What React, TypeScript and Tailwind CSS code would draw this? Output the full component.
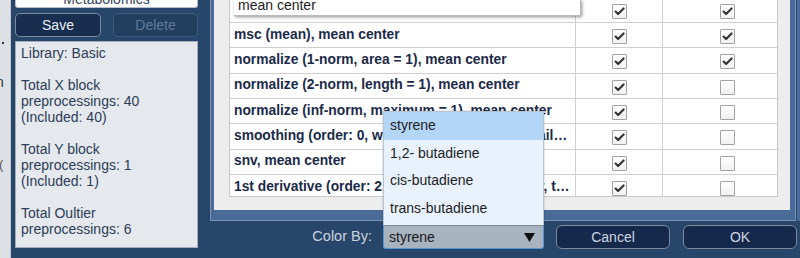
import React from "react";

const FONT = { fontFamily: '"Liberation Sans", Arial, sans-serif' };

const rows = [
  { t: "baseline (weighted least squares, order: 2, poly), mean center", a: true, b: true },
  { t: "msc (mean), mean center", a: true, b: true },
  { t: "normalize (1-norm, area = 1), mean center", a: true, b: true },
  { t: "normalize (2-norm, length = 1), mean center", a: true, b: false },
  { t: "normalize (inf-norm, maximum = 1), mean center", a: true, b: false },
  { t: "smoothing (order: 0, window: 15 pt, incl only, tails: polyinterp), mean center", a: true, b: false },
  { t: "snv, mean center", a: true, b: false },
  { t: "1st derivative (order: 2, window: 15 pt, incl only, tails: polyinterp), mean center", a: true, b: false },
];

function Check({ on }: { on: boolean }) {
  return (
    <div className="w-[15px] h-[15px] border border-[#a2a2a2] bg-gradient-to-b from-white to-[#f1f1f1] rounded-[1px] flex items-center justify-center">
      {on && (
        <svg width="11" height="9" viewBox="0 0 11 9">
          <path d="M1.6 4.6 L4.1 7.1 L9.6 1.4" fill="none" stroke="#333" strokeWidth="2.1" strokeLinecap="round" strokeLinejoin="round" />
        </svg>
      )}
    </div>
  );
}

export default function App() {
  return (
    <div className="w-[800px] h-[258px] bg-[#284669] flex overflow-hidden" style={FONT}>
      {/* left strip (window behind) */}
      <div className="w-[11px] h-full bg-[#dde1e6] border-r border-[#c3c9d1] flex flex-col overflow-hidden">
        <div className="mt-[42px] ml-[2px] w-[2px] h-[2px] bg-[#333]" />
        <div className="mt-[30px] -ml-[4px] text-[14px] leading-[16px] text-[#333]">n</div>
        <div className="mt-[68px] -ml-[1px] text-[13px] leading-[14px] text-[#555]">(</div>
      </div>

      {/* left column */}
      <div className="ml-[4px] w-[183px] flex flex-col">
        <div className="h-[8px] bg-white border-x border-b border-[#b5bfcb] rounded-b-[3px] overflow-hidden">
          <div className="-mt-[8px] text-center text-[14px] leading-[14px] text-[#34455c]">Metabolomics</div>
        </div>
        <div className="mt-[5px] flex gap-[12px]">
          <div className="w-[86px] h-[24px] rounded-[5px] bg-[#182e4e] border border-[#7e8b9b] flex items-center justify-center text-[14px] text-[#e8eef5]">
            Save
          </div>
          <div className="w-[85px] h-[24px] rounded-[5px] bg-[#233f5f] border border-[#3f5c7c] flex items-center justify-center text-[14px] text-[#5f7998]">
            Delete
          </div>
        </div>
        <div className="mt-[4px] h-[207px] bg-[#e5e8ed] border border-[#a4adba] pl-[5px] pt-[3px] text-[14px] leading-[16px] text-[#2e3d57]">
          <div>Library: Basic</div>
          <div className="h-[16px]" />
          <div>Total X block</div>
          <div>preprocessings: 40</div>
          <div>(Included: 40)</div>
          <div className="h-[16px]" />
          <div>Total Y block</div>
          <div>preprocessings: 1</div>
          <div>(Included: 1)</div>
          <div className="h-[16px]" />
          <div>Total Oultier</div>
          <div>preprocessings: 6</div>
        </div>
      </div>

      {/* right column */}
      <div className="ml-[12px] w-[587px] flex flex-col">
        <div className="w-[586px] h-[221px] bg-[#4a6b97] border-l border-r border-b border-[#7891b4] pl-[3px] pr-[5px] pb-[10px]">
          <div className="h-[210px] bg-[#ededed] pl-[15px] pr-[12px]">
            <div className="relative h-[197px] bg-white border-l border-r border-b border-[#c8c8c8] overflow-hidden">
              <div className="-mt-[2.33px]">
                {rows.map((r, i) => (
                  <div key={i} className="flex h-[25.33px] border-b border-[#cfcfcf]">
                    <div className="w-[346px] border-r border-[#cfcfcf] pl-[4px] pr-[5px] flex items-center overflow-hidden">
                      <span className="truncate font-bold text-[13.8px] text-[#1c2a48]">{r.t}</span>
                    </div>
                    <div className="w-[87px] border-r border-[#cfcfcf] flex justify-center pt-[6px]">
                      <Check on={r.a} />
                    </div>
                    <div className="flex-1 pl-[57px] pt-[6px]">
                      <Check on={r.b} />
                    </div>
                  </div>
                ))}
              </div>
              {/* tooltip */}
              <div className="absolute top-0 left-[4px] w-[347px] h-[16px] bg-white border-r border-b border-[#b9b9b9] shadow-[1px_1px_3px_rgba(0,0,0,0.45)] overflow-hidden">
                <div className="-mt-[2px] pl-[4px] text-[14px] leading-[14px] text-[#1d1d1d]">mean center</div>
              </div>
            </div>
          </div>
        </div>

        {/* bottom bar */}
        <div className="mt-[4px] h-[24px] flex items-center justify-end">
          <div className="mr-[11px] text-[14.5px] text-[#c9d3df]">Color By:</div>
          <div className="relative w-[161px] h-[24px]">
            <div className="absolute bottom-full left-0 w-[161px] bg-[#e8f1fc] border-x border-t border-[#b8c4d2] pb-[3px] shadow-[0_0_2px_rgba(0,0,0,0.25)]">
              <div className="h-[28px] bg-[#b3d6f7] pl-[6px] flex items-center text-[14px] text-[#1e1e1e]">styrene</div>
              <div className="h-[27.5px] pl-[6px] flex items-center text-[14px] text-[#1e1e1e]">1,2- butadiene</div>
              <div className="h-[27.5px] pl-[6px] flex items-center text-[14px] text-[#1e1e1e]">cis-butadiene</div>
              <div className="h-[27.5px] pl-[6px] flex items-center text-[14px] text-[#1e1e1e]">trans-butadiene</div>
            </div>
            <div className="h-[24px] bg-[#a8b3c0] border border-[#5a92d6] border-t-[#8d9aa9] rounded-b-[3px] pl-[5px] pr-[8px] flex items-center justify-between text-[14px] text-[#1a1a1a]">
              <span>styrene</span>
              <svg width="11" height="9" viewBox="0 0 11 9">
                <polygon points="0,0 11,0 5.5,9" fill="#111" />
              </svg>
            </div>
          </div>
          <div className="ml-[12px] w-[114px] h-[24px] rounded-[6px] bg-[#15294a] border border-[#7d8a9b] flex items-center justify-center text-[14px] text-[#cdd6e1]">
            Cancel
          </div>
          <div className="ml-[13px] w-[114px] h-[24px] rounded-[6px] bg-[#15294a] border border-[#7d8a9b] flex items-center justify-center text-[14px] text-[#cdd6e1]">
            OK
          </div>
        </div>
      </div>
      <div className="w-[3px] h-[221px] bg-[#4a6b97]" />
    </div>
  );
}
